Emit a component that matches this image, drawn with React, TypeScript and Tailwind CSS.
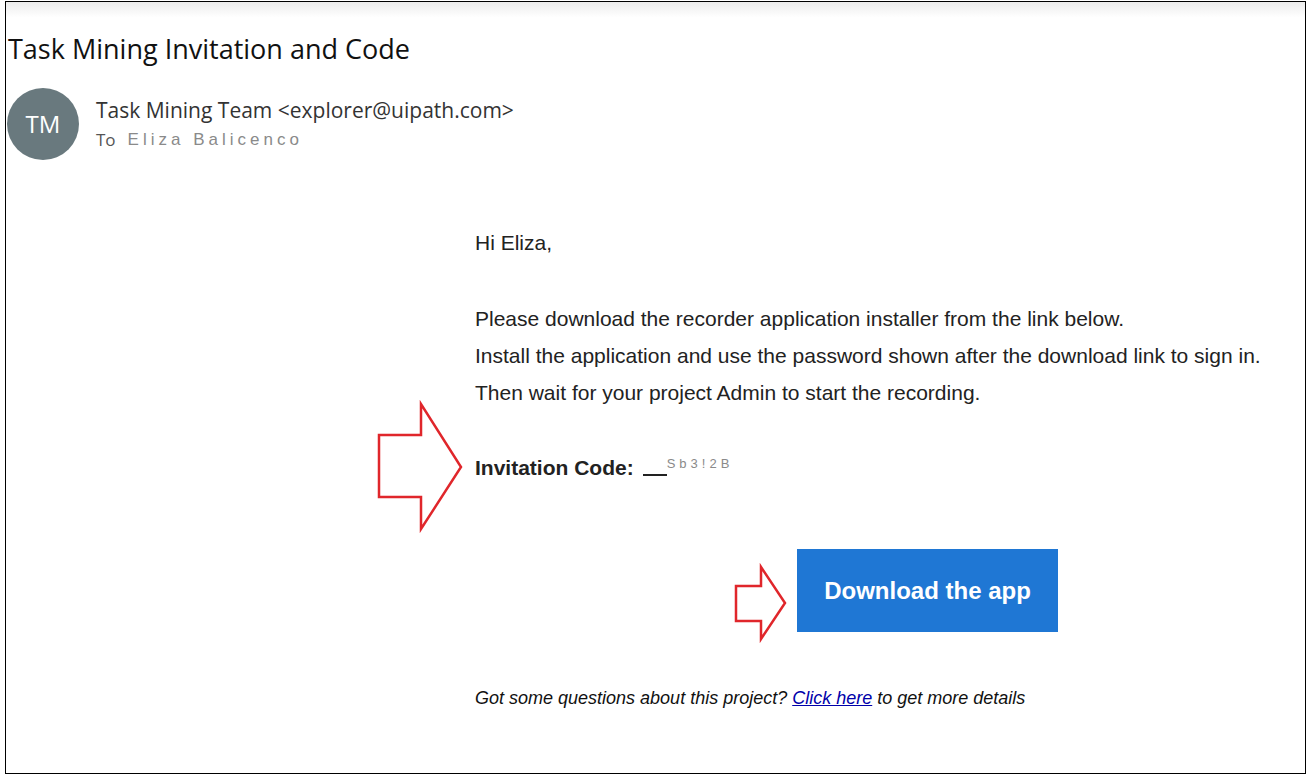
export default function App() {
  return (
    <div className="w-[1308px] h-[777px] bg-white overflow-hidden">
      <div className="relative ml-[5px] mt-[1px] w-[1301px] h-[773px] border border-black bg-gradient-to-b from-[#ececec] via-white via-[2%] to-white">
        {/* header */}
        <h1 className="pl-[2px] pt-[30px] text-[27px] leading-[34px] text-[#111] font-['Open_Sans',sans-serif]">
          Task Mining Invitation and Code
        </h1>
        <div className="flex items-start gap-[17px] pl-[1px] pt-[22px]">
          <div className="w-[72px] h-[72px] rounded-full bg-[#69797e] flex items-center justify-center text-white text-[24px] font-['Open_Sans',sans-serif]">
            TM
          </div>
          <div className="pt-[8px] font-['Open_Sans',sans-serif]">
            <div className="text-[21px] leading-[28px] text-[#333]">Task Mining Team &lt;explorer@uipath.com&gt;</div>
            <div className="mt-[4px] flex items-center gap-[12px] text-[17px] leading-[24px] text-[#555]">
              <span>To</span>
              <span className="text-[#8a8a8a] font-['Liberation_Sans',sans-serif] tracking-[4px]">Eliza Balicenco</span>
            </div>
          </div>
        </div>

        {/* body */}
        <div className="pl-[469px] pt-[68px] font-['Liberation_Sans',Arial,sans-serif] text-[21px] text-[#222]">
          <p className="leading-[30px]">Hi Eliza,</p>
          <div className="pt-[42px] leading-[37px]">
            <p>Please download the recorder application installer from the link below.</p>
            <p>Install the application and use the password shown after the download link to sign in.</p>
            <p>Then wait for your project Admin to start the recording.</p>
          </div>
          <div className="pt-[42px] flex items-end leading-[30px]">
            <span className="font-bold">Invitation Code:</span>
            <span className="ml-[9px] mb-[7px] w-[24px] border-b-2 border-[#222]" />
            <span className="self-start -mt-[4px] text-[13px] text-[#8a8a8a] tracking-[4px]">Sb3!2B</span>
          </div>
          <div className="pt-[66px] pl-[322px]">
            <div className="w-[261px] h-[83px] bg-[#1f77d4] flex items-center justify-center text-white font-bold text-[24px]">
              Download the app
            </div>
          </div>
          <p className="pt-[54px] italic text-[18px] leading-[24px] text-[#111]">
            Got some questions about this project?{' '}
            <a className="text-[#0000aa] underline">Click here</a> to get more details
          </p>
        </div>

        {/* annotation arrows */}
        <svg className="absolute left-[-6px] top-[-2px] pointer-events-none" width="1308" height="777">
          <polygon
            points="379,435 421,435 421,404 461,467 421,529 421,497 379,497"
            fill="none"
            stroke="#e0262b"
            strokeWidth="2.5"
          />
          <polygon
            points="736,586 761,586 761,567 785,603 761,639 761,621 736,621"
            fill="none"
            stroke="#e0262b"
            strokeWidth="2.5"
          />
        </svg>
      </div>
    </div>
  );
}
